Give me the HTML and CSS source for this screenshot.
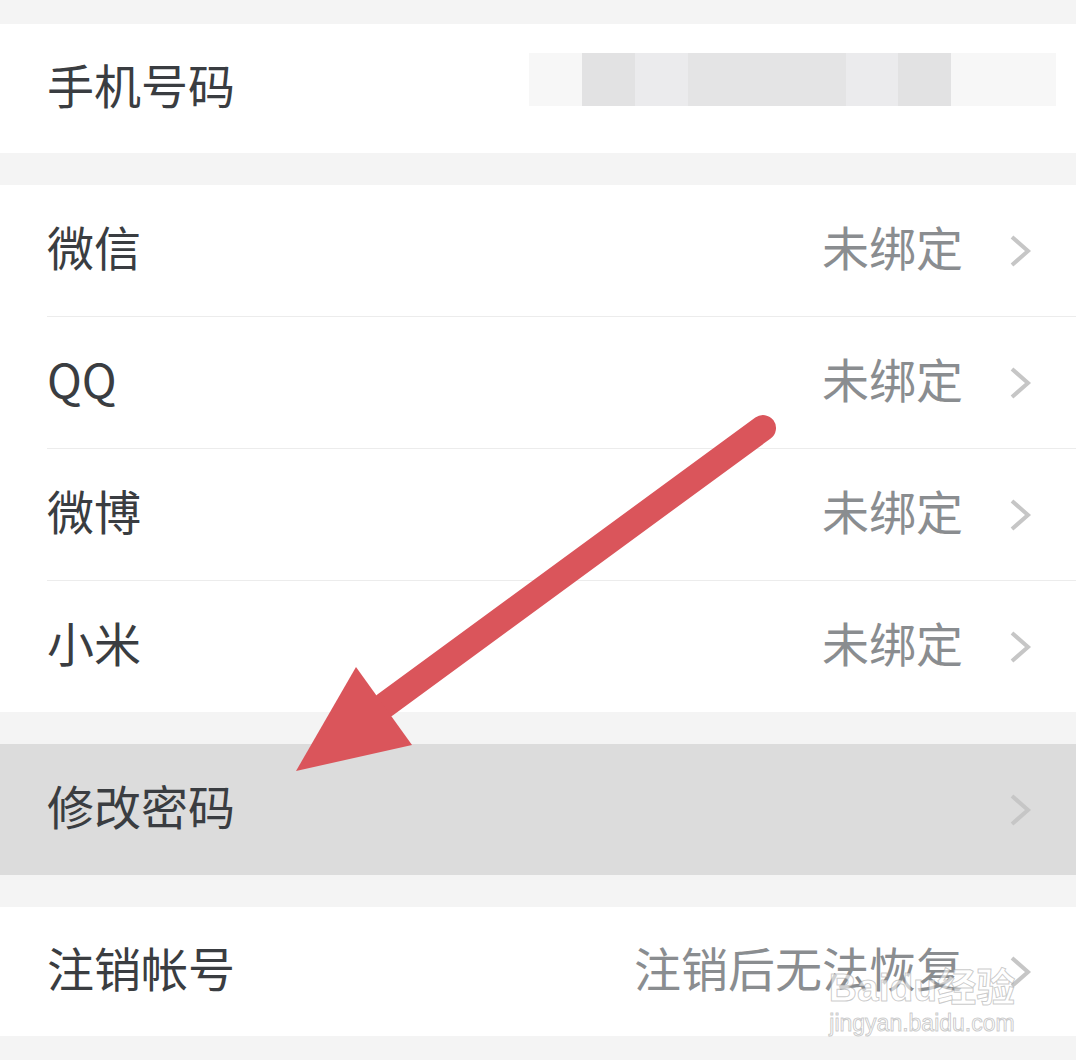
FILE: index.html
```html
<!DOCTYPE html>
<html lang="zh-CN">
<head>
    <meta charset="UTF-8">
    <meta name="viewport" content="width=device-width, initial-scale=1.0">
    <title>帐号与安全</title>
    <link rel="stylesheet" href="styles.css">
</head>
<body>

    <div class="screen">

        <!-- phone number, value blurred out -->
        <div class="group">
            <div class="row row-short">
                <span class="label">手机号码</span>
                <div class="blur">
                    <span class="blk blk-faint"></span>
                    <span class="blk blk-dark"></span>
                    <span class="blk blk-light"></span>
                    <span class="blk blk-mid"></span>
                    <span class="blk blk-light blk-narrow"></span>
                    <span class="blk blk-dark"></span>
                    <span class="blk blk-faint blk-wide"></span>
                </div>
            </div>
        </div>

        <!-- third party accounts -->
        <div class="group">
            <div class="row">
                <span class="label">微信</span>
                <span class="value">未绑定</span>
                <svg class="chevron" viewBox="0 0 24 34"><polyline points="4,3 20,17 4,31"/></svg>
            </div>
            <div class="row">
                <span class="label">QQ</span>
                <span class="value">未绑定</span>
                <svg class="chevron" viewBox="0 0 24 34"><polyline points="4,3 20,17 4,31"/></svg>
            </div>
            <div class="row">
                <span class="label">微博</span>
                <span class="value">未绑定</span>
                <svg class="chevron" viewBox="0 0 24 34"><polyline points="4,3 20,17 4,31"/></svg>
            </div>
            <div class="row">
                <span class="label">小米</span>
                <span class="value">未绑定</span>
                <svg class="chevron" viewBox="0 0 24 34"><polyline points="4,3 20,17 4,31"/></svg>
            </div>
        </div>

        <div class="group">
            <div class="row row-pressed">
                <span class="label">修改密码</span>
                <svg class="chevron" viewBox="0 0 24 34"><polyline points="4,3 20,17 4,31"/></svg>
            </div>
        </div>

        <div class="group">
            <div class="row row-short">
                <span class="label">注销帐号</span>
                <span class="value">注销后无法恢复</span>
                <svg class="chevron" viewBox="0 0 24 34"><polyline points="4,3 20,17 4,31"/></svg>
            </div>
        </div>

        <!-- annotation arrow drawn over the list -->
        <svg class="arrow" viewBox="0 0 1076 1060">
            <line x1="763" y1="428" x2="385" y2="705"/>
            <polygon points="356,667 296,771 412,745"/>
        </svg>

        <!-- watermark -->
        <div class="watermark">
            <div class="wm-brand">Bai<span class="wm-du">du</span>经验</div>
            <div class="wm-site">jingyan.baidu.com</div>
        </div>
    </div>

</body>
</html>
```

FILE: styles.css
```css
/* Basic reset */
html, body {
    margin: 0;
    padding: 0;
    background: #f4f4f4;
}

.screen {
    position: relative;
    width: 1076px;
    height: 1060px;
    overflow: hidden;
    padding-top: 24px;
    box-sizing: border-box;
    display: flex;
    flex-direction: column;
    gap: 32px;
    font-family: "Noto Sans CJK SC", "Noto Sans", sans-serif;
}

.group {
    background: #fff;
    display: flex;
    flex-direction: column;
}

/* each row is label on the left, value + chevron on the right */
.row {
    height: 131px;
    display: flex;
    align-items: center;
    padding: 0 44px 0 47px;
    background: #fff;
}

/* inset divider, starts under the label */
.row + .row {
    height: 132px;
    padding-top: 1px;
    box-sizing: border-box;
    background: linear-gradient(#ececec, #ececec) 47px 0 / 100% 1px no-repeat, #fff;
}

.row-short {
    height: 129px;
}

.row-pressed {
    background: #dcdcdc;
}

.label {
    font-size: 47px;
    color: #3a3d41;
    flex: 1;
    line-height: 1;
    padding-bottom: 10px;
}

.value {
    font-size: 47px;
    color: #8a8d90;
    line-height: 1;
    margin-right: 45px;
    padding-bottom: 10px;
}

.chevron {
    width: 24px;
    height: 34px;
    fill: none;
    stroke: #c6c6c6;
    stroke-width: 4;
}

/* the blurred-out phone number */
.blur {
    display: flex;
    height: 53px;
    margin-right: -24px;
    margin-bottom: 18px;
}

.blk {
    width: 53px;
    height: 100%;
}

.blk-faint { background: #f7f7f7; }
.blk-dark { background: #e2e2e3; }
.blk-light { background: #ebebed; }
.blk-mid { background: #e4e4e5; width: 158px; }
.blk-narrow { width: 52px; }
.blk-wide { width: 105px; }

/* overlay arrow */
.arrow {
    position: absolute;
    left: 0;
    top: 0;
    width: 1076px;
    height: 1060px;
    pointer-events: none;
}

.arrow line {
    stroke: #da555b;
    stroke-width: 26;
    stroke-linecap: round;
}

.arrow polygon {
    fill: #da555b;
}

.watermark {
    position: absolute;
    left: 822px;
    top: 966px;
    width: 200px;
    white-space: nowrap;
    color: rgba(255, 255, 255, 0.6);
    -webkit-text-stroke: 1px rgba(140, 140, 140, 0.45);
    font-family: "Liberation Sans", "Noto Sans CJK SC", sans-serif;
    text-align: center;
    pointer-events: none;
}

.wm-brand {
    font-size: 39px;
    line-height: 44px;
    font-weight: bold;
}

.wm-site {
    font-size: 23px;
    line-height: 26px;
}
```
